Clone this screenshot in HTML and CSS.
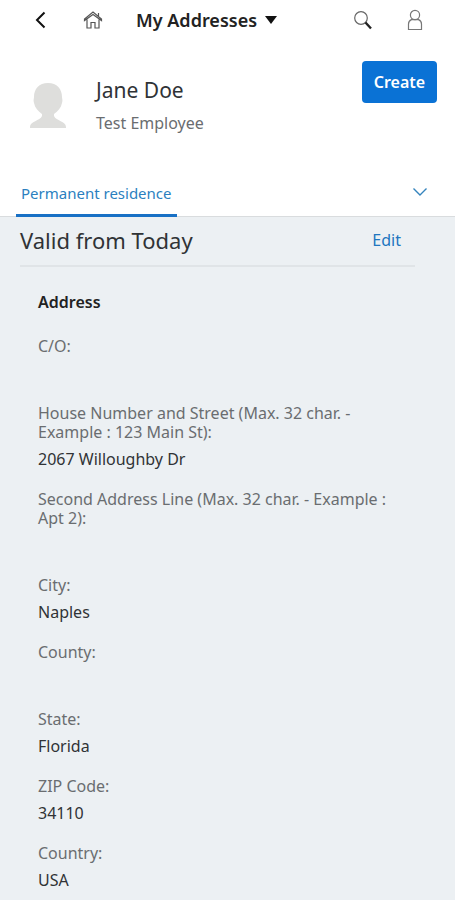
FILE: index.html
```html
<!DOCTYPE html>
<html lang="en">
<head>
<meta charset="utf-8">
<meta name="viewport" content="width=device-width, initial-scale=1">
<title>My Addresses</title>
<link rel="stylesheet" href="styles.css">
</head>
<body>
<header class="shell">
  <button class="icon-button" type="button" aria-label="Back">
    <svg width="20" height="20" viewBox="0 0 20 20"><path d="M14.500 2.500 7 10l7.500 7.500" fill="none" stroke="#111" stroke-width="2"/></svg>
  </button>
  <button class="icon-button home" type="button" aria-label="Home">
    <svg width="20" height="20" viewBox="0 0 20 20" fill="none" stroke="#555" stroke-width="1.200"><path d="M1.500 10.500V9L10 2l8.500 7v1.500L10 4.500l-8.500 6zM4 9.500V18h4v-5.500h4V18h4V9.500M15.500 6V3"/></svg>
  </button>
  <button class="title" type="button">My Addresses
    <svg width="12" height="8" viewBox="0 0 12 8"><path d="M0 0h12L6 8z" fill="#111"/></svg>
  </button>
  <button class="icon-button search" type="button" aria-label="Search">
    <svg width="20" height="20" viewBox="0 0 20 20" fill="none"><circle cx="8" cy="8" r="6.300" stroke="#666" stroke-width="1.200"/><path d="m12.500 12.500 5.500 6" stroke="#222" stroke-width="2.400"/></svg>
  </button>
  <button class="icon-button" type="button" aria-label="Profile">
    <svg width="20" height="22" viewBox="0 0 20 22" fill="none" stroke="#777" stroke-width="1.200"><circle cx="10" cy="6" r="4.600"/><path d="M6.500 10.600C4.500 11.500 3.500 12.500 3.500 15v5.500h13V15c0-2.500-1-3.500-3-4.400z"/></svg>
  </button>
</header>
<main>
  <section class="person">
    <svg class="avatar" width="38" height="48" viewBox="0 0 38 48" aria-hidden="true"><path d="M19 1C10 1 5 7 5 15c0 2-1 3 0 6 1 5 4 8 8 11v2C11 39 1 39 1 45v1h36v-1c0-6-10-6-12-11v-2c4-3 7-6 8-11 1-3 0-4 0-6 0-8-5-14-14-14z" fill="#dededc"/></svg>
    <div class="identity">
      <h1>Jane Doe</h1>
      <p>Test Employee</p>
    </div>
    <button class="create" type="button">Create</button>
  </section>
  <nav class="tabs">
    <a class="tab" href="#residence">Permanent residence</a>
    <button class="icon-button expand" type="button" aria-label="More tabs">
      <svg width="16" height="10" viewBox="0 0 16 10"><path d="m1.500 1.500 6.500 6.500 6.500-6.500" fill="none" stroke="#3584bd" stroke-width="1.400"/></svg>
    </button>
  </nav>
  <section class="residence" id="residence">
    <div class="period">
      <h2>Valid from Today</h2>
      <button class="edit" type="button">Edit</button>
    </div>
    <div class="address">
      <h3>Address</h3>
      <dl>
        <dt>C/O:</dt><dd></dd>
        <dt>House Number and Street (Max. 32 char. - Example : 123 Main St):</dt><dd>2067 Willoughby Dr</dd>
        <dt>Second Address Line (Max. 32 char. - Example : Apt 2):</dt><dd></dd>
        <dt>City:</dt><dd>Naples</dd>
        <dt>County:</dt><dd></dd>
        <dt>State:</dt><dd>Florida</dd>
        <dt>ZIP Code:</dt><dd>34110</dd>
        <dt>Country:</dt><dd>USA</dd>
      </dl>
    </div>
  </section>
</main>
</body>
</html>
```
FILE: styles.css
```css
* { box-sizing: border-box; }
body {
  margin: 0;
  background: #ecf0f3;
  color: #303336;
  font: 16px/20px "Noto Sans", "Open Sans", sans-serif;
}
h1, h2, h3, p, dl, dd { margin: 0; }
button {
  padding: 0;
  border: 0;
  background: none;
  font: inherit;
  cursor: pointer;
}
svg { display: block; flex: none; }
.shell {
  display: flex;
  align-items: center;
  height: 40px;
  padding: 0 24px;
  background: #fff;
}
.icon-button {
  display: flex;
  align-items: center;
  justify-content: center;
  width: 32px;
  height: 32px;
}
.home { margin-left: 21px; }
.title {
  display: flex;
  align-items: center;
  gap: 8px;
  margin-left: 27px;
  color: #222;
  font-size: 18px;
  font-weight: 600;
}
.search { margin: 0 20px 0 auto; }
.person {
  display: flex;
  align-items: flex-start;
  height: 130px;
  padding: 21px 18px 0 29px;
  background: #fff;
}
.avatar { margin-top: 21px; }
.identity { flex: 1; padding-top: 16px; margin-left: 29px; }
h1 { font-size: 21px; font-weight: 400; line-height: 26px; }
.identity p { margin-top: 10px; color: #6a6d70; }
.create {
  width: 75px;
  height: 42px;
  border-radius: 4px;
  background: #0a72d5;
  color: #fff;
  font-weight: 600;
}
.tabs {
  display: flex;
  justify-content: space-between;
  height: 47px;
  padding: 0 19px 0 16px;
  border-bottom: 1px solid #d9dcde;
  background: #fff;
}
.tab {
  height: 47px;
  padding: 13px 5px 0;
  border-bottom: 3px solid #1870c5;
  color: #2b7fbf;
  font-size: 15px;
  text-decoration: none;
}
.expand { margin-top: 6px; }
.residence { padding: 0 40px 16px 20px; }
.period {
  display: flex;
  align-items: center;
  justify-content: space-between;
  height: 50px;
  padding: 0 14px 2px 0;
  border-bottom: 2px solid #e0e4e7;
}
h2 { font-size: 22px; font-weight: 400; line-height: 28px; }
.edit { color: #2176bf; }
.address { padding: 25px 0 0 18px; }
h3 { color: #222; font-size: 16px; font-weight: 600; line-height: 20px; }
dl { margin-top: 25px; }
dt { color: #6a6d70; line-height: 19px; }
dd { min-height: 20px; margin: 7px 0 21px; }
```
